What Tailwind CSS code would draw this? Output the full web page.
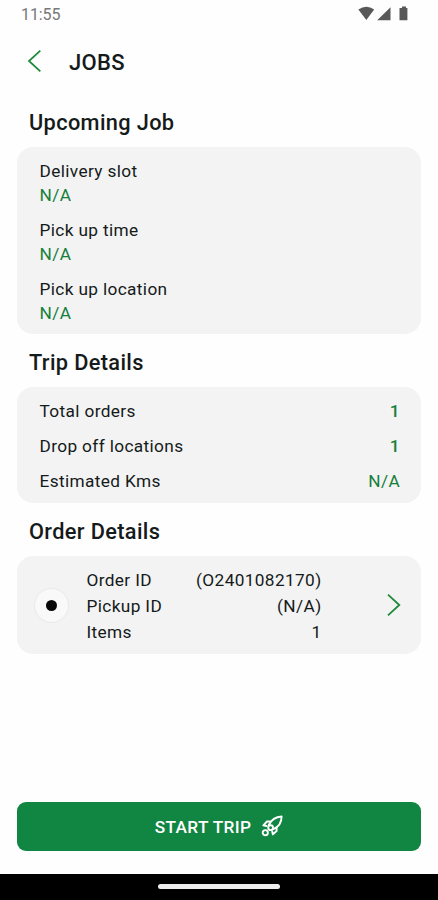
<!DOCTYPE html>
<html lang="en">
<head>
<meta charset="utf-8">
<meta name="viewport" content="width=device-width, initial-scale=1">
<title>Jobs</title>
<script src="https://cdn.jsdelivr.net/npm/@tailwindcss/browser@4"></script>
</head>
<body class="bg-white">
<div class="flex h-[900px] w-[438px] flex-col overflow-hidden bg-[#fefefe] font-[Roboto,sans-serif] text-[17.25px] tracking-[0.36px] text-[#151a1a]">
  <div class="flex h-7 shrink-0 items-center justify-between pr-[30px] pl-[21px]">
    <span class="pt-px text-[16px] leading-7 tracking-[-0.1px] text-[#777]">11:55</span>
    <svg class="h-7 w-[50px]" viewBox="0 0 50 28" fill="#585858">
      <path d="M.4 9.6Q8.300 4 16.200 9.600L8.300 20Z"/>
      <path d="M32.500 7.200V20.300H19.200Z"/>
      <path d="M42.500 8H44V6.600H48V8H49.400V20.300H41.500V8Z"/>
    </svg>
  </div>
  <header class="flex h-[66px] shrink-0 items-center pl-[27px]">
    <svg class="h-6 w-4" viewBox="0 0 16 24" fill="none" stroke="#1f8a3c" stroke-width="1.800"><path d="M13.300 1.600 2 12 13.300 22.400"/></svg>
    <h1 class="mt-[3px] ml-[26px] text-[22px] leading-[26px] font-medium">JOBS</h1>
  </header>

  <main class="flex flex-1 flex-col px-[17px]">
    <h2 class="mt-[15px] pl-3 text-[21.75px] leading-7 font-medium">Upcoming Job</h2>
    <section class="mt-[10px] flex h-[187px] flex-col gap-[11px] rounded-2xl bg-[#f3f3f3] pt-[11.5px] pl-[22.5px] leading-6">
      <div><p>Delivery slot</p><p class="text-[#16803a]">N/A</p></div>
      <div><p>Pick up time</p><p class="text-[#16803a]">N/A</p></div>
      <div><p>Pick up location</p><p class="text-[#16803a]">N/A</p></div>
    </section>

    <h2 class="mt-[15px] pl-3 text-[21.75px] leading-7 font-medium">Trip Details</h2>
    <section class="mt-[10px] flex h-[116px] flex-col gap-[11px] rounded-2xl bg-[#f3f3f3] pt-3 pr-[21px] pl-[22.5px] leading-6">
      <div class="flex justify-between"><span>Total orders</span><span class="font-medium text-[#16803a]">1</span></div>
      <div class="flex justify-between"><span>Drop off locations</span><span class="font-medium text-[#16803a]">1</span></div>
      <div class="flex justify-between"><span>Estimated Kms</span><span class="text-[#16803a]">N/A</span></div>
    </section>

    <h2 class="mt-[15px] pl-3 text-[21.75px] leading-7 font-medium">Order Details</h2>
    <section class="mt-[10px] flex h-[98px] items-center rounded-2xl bg-[#f3f3f3] pr-5 pl-[17px] leading-[26px]">
      <div class="flex size-[35px] items-center justify-center rounded-full border border-[#e9e9e9] bg-[#f9f9f9]"><span class="size-[11px] rounded-full bg-[#080808]"></span></div>
      <div class="ml-[17.5px] w-[235px] pt-px">
        <div class="flex justify-between"><span>Order ID</span><span>(O2401082170)</span></div>
        <div class="flex justify-between"><span>Pickup ID</span><span>(N/A)</span></div>
        <div class="flex justify-between"><span>Items</span><span>1</span></div>
      </div>
      <svg class="ml-auto h-6 w-4" viewBox="0 0 16 24" fill="none" stroke="#1f8a3c" stroke-width="1.800"><path d="M3 1.600 14.300 12 3 22.400"/></svg>
    </section>
  </main>

  <div class="shrink-0 px-[17px] pb-[23px]">
    <button class="flex h-[49px] w-full items-center justify-center gap-[10px] rounded-[9px] bg-[#118542] pt-[3px] font-medium text-white">
      <span>START TRIP</span>
      <svg class="-mt-1 size-[22px]" viewBox="0 0 22 22" fill="none" stroke="#fff" stroke-width="1.900" stroke-linecap="round" stroke-linejoin="round">
        <path d="M7.800 10C10.200 5 14 1.900 20.600 1.500C20.600 7.400 17.400 12 12.400 14.200"/>
        <path d="M9 6.500H6L2.300 10.300 5.600 11M15.600 13V16L11.800 19.400 11.200 16.400"/>
        <circle cx="4.300" cy="17.700" r="2.600"/>
        <circle cx="9.600" cy="12.700" r="2.400"/>
      </svg>
    </button>
  </div>
  <div class="flex h-[26px] shrink-0 justify-center bg-black pt-[10px]"><span class="h-[5px] w-[122px] rounded-full bg-[#ededed]"></span></div>
</div>
</body>
</html>
